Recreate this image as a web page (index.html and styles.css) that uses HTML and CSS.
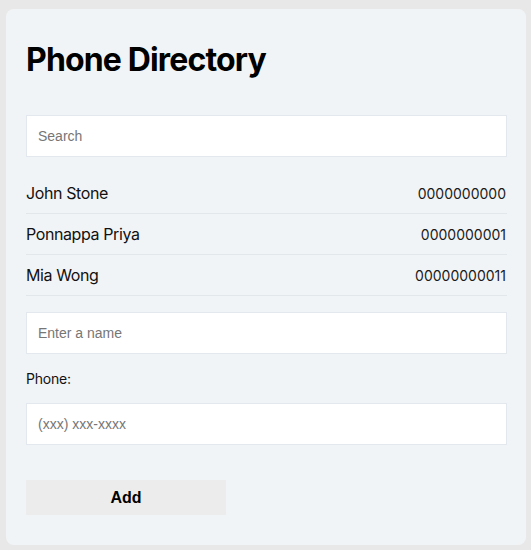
FILE: index.html
```html
<!DOCTYPE html>
<html lang="en">
<head>
<meta charset="utf-8">
<title>Phone Directory</title>
<link rel="stylesheet" href="styles.css">
</head>
<body>
<main class="card">
  <h1 class="title">Phone Directory</h1>
  <input class="field search" type="text" placeholder="Search">
  <ul class="list">
    <li class="row"><span class="name">John Stone</span><span class="num">0000000000</span></li>
    <li class="row"><span class="name">Ponnappa Priya</span><span class="num">0000000001</span></li>
    <li class="row"><span class="name">Mia Wong</span><span class="num">00000000011</span></li>
  </ul>
  <input class="field name-input" type="text" placeholder="Enter a name">
  <label class="label">Phone:</label>
  <input class="field" type="text" placeholder="(xxx) xxx-xxxx">
  <button class="add" type="button">Add</button>
</main>
</body>
</html>
```
FILE: styles.css
```css
html, body {
  margin: 0;
  background: #e8e8e8;
}
body {
  padding: 9px 5px 5px 6px;
  font-family: Inter, "Noto Sans", sans-serif;
  color: #111;
}
.card {
  background: #f1f4f6;
  border-radius: 8px;
  padding: 31px 19px 30px 20px;
  display: flex;
  flex-direction: column;
  align-items: stretch;
}
.title {
  margin: 0 0 36px;
  font-size: 32px;
  font-weight: 700;
  line-height: 39px;
  letter-spacing: -0.85px;
  color: #000;
}
.field {
  box-sizing: border-box;
  height: 42px;
  margin: 0;
  padding: 0 11px;
  border: 1px solid #e3e8ee;
  border-radius: 0;
  background: #fff;
  font-family: "Liberation Sans", Arial, sans-serif;
  font-size: 14px;
  color: #222;
  outline: none;
}
.field::placeholder {
  color: #767676;
}
.list {
  list-style: none;
  margin: 16px 0 16px;
  padding: 0;
}
.row {
  display: flex;
  justify-content: space-between;
  align-items: center;
  height: 40px;
  border-bottom: 1px solid #e2e7ec;
  font-size: 16px;
}
.name {
  color: #111;
  letter-spacing: -0.4px;
}
.num {
  font-size: 14px;
  color: #1a1a1a;
  padding-right: 1px;
}
.label {
  margin: 15px 0 14px;
  font-size: 14px;
  line-height: 20px;
  letter-spacing: -0.2px;
  color: #111;
}
.add {
  align-self: flex-start;
  margin-top: 35px;
  width: 200px;
  height: 35px;
  border: none;
  background: #ececec;
  font-family: "Liberation Sans", Arial, sans-serif;
  font-size: 16px;
  font-weight: 700;
  color: #000;
}
```
